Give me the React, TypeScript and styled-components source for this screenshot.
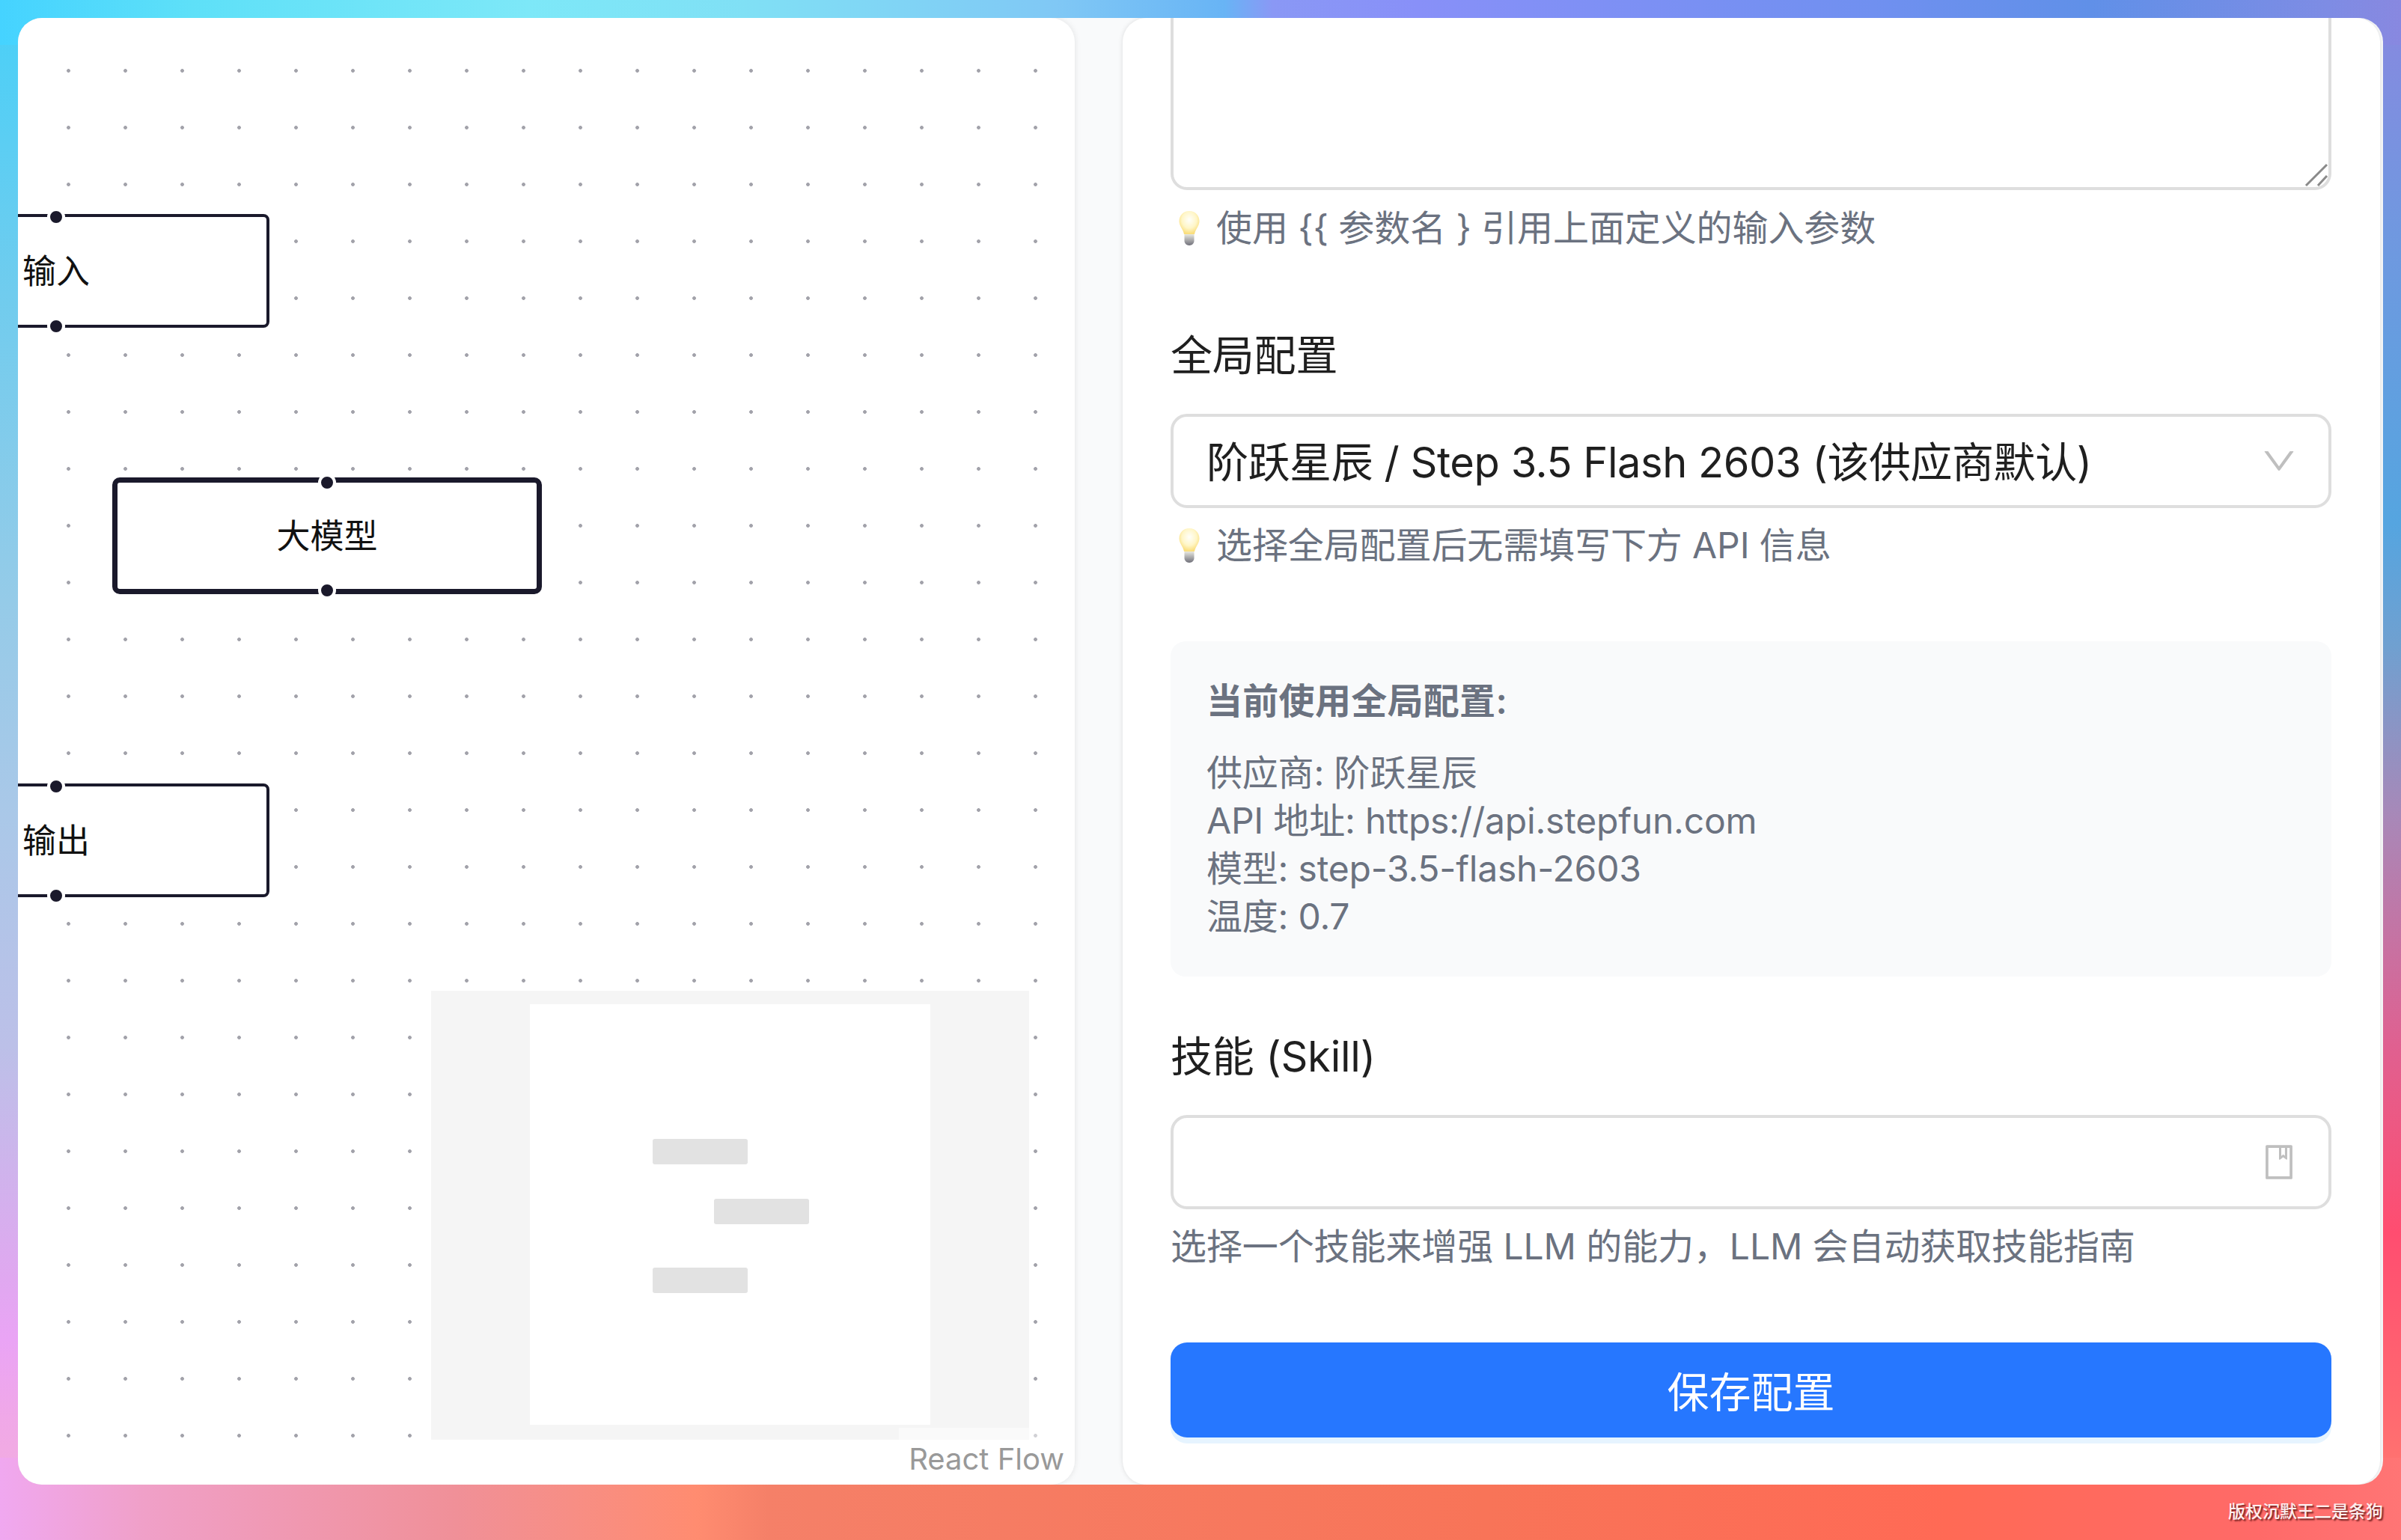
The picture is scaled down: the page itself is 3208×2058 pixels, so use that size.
import styled, { createGlobalStyle } from "styled-components";
import { AiOutlineBook, AiOutlineDown } from "react-icons/ai";

const GlobalStyle = createGlobalStyle`
  * {
    box-sizing: border-box;
  }

  body {
    margin: 0;
    font-family: Inter, "Noto Sans CJK SC", sans-serif;
  }
`;

const Page = styled.div`
  position: relative;
  width: 3208px;
  height: 2058px;
  padding: 24px 24px 74px;
  background-repeat: no-repeat;
  background-image:
    linear-gradient(90deg, #45d3ff 0%, #5ee0f8 8%, #7de8f8 22%, #80e0f5 31%, #80c8f5 44%, #68b4f5 51%, #8a98f5 53%, #8890f8 59%, #7090f0 78%, #6090e8 87%, #7e8ce4 97%, #8888e0 100%),
    linear-gradient(90deg, #f0a8f0 0%, #f0a0c8 6%, #f09098 19%, #ff8c70 29%, #f58068 32%, #f87458 62%, #ff6a55 81%, #ff6a68 94%, #ff7575 100%),
    linear-gradient(180deg, #48d0f8 0%, #70ccee 19%, #95cbe8 39%, #aac8e8 53%, #bcc0e8 68%, #e0a8f0 83%, #eaa4f5 87%, #f0a8e8 92%, #f4b0d8 100%),
    linear-gradient(180deg, #8888e0 0%, #7098e0 15%, #55a5e0 34%, #70a0d0 42%, #a888b8 53%, #e06090 68%, #ff4d70 80%, #ff6a70 92%, #ff8070 100%);
  background-size: 100% 60px, 100% 110px, 60px 100%, 60px 100%;
  background-position: top, bottom, left, right;
`;

const Shell = styled.div`
  display: flex;
  gap: 64px;
  height: 100%;
  padding-right: 4px;
  border-radius: 32px;
  background: #f9fafb;
  overflow: hidden;
`;

const Canvas = styled.div`
  position: relative;
  flex: 0 0 1412px;
  border-radius: 32px;
  overflow: hidden;
  box-shadow: 0 0 8px rgba(0, 0, 0, 0.1);
  background-color: #fff;
  background-image: radial-gradient(circle at 67.5px 70.5px, #a2a2aa 2px, transparent 2.8px);
  background-size: 76px 76px;
`;

const FlowNode = styled.div<{ $left: number; $top: number; $bold?: boolean }>`
  position: absolute;
  left: ${(props) => props.$left}px;
  top: ${(props) => props.$top}px;
  width: ${(props) => (props.$bold ? 574 : 570)}px;
  height: ${(props) => (props.$bold ? 156 : 152)}px;
  display: flex;
  align-items: center;
  justify-content: center;
  padding-top: 2px;
  background: #fff;
  border: ${(props) => (props.$bold ? 7 : 4)}px solid #1a192b;
  border-radius: ${(props) => (props.$bold ? 10 : 8)}px;
  color: #111;
  font-size: 45px;
  line-height: 60px;
`;

const Handle = styled.span<{ $side: "top" | "bottom" }>`
  position: absolute;
  left: 50%;
  ${(props) => props.$side}: ${(props) => (props.$side === "top" ? 0 : -2)}px;
  width: 24px;
  height: 24px;
  background: #1a192b;
  border: 4px solid #fff;
  border-radius: 50%;
  transform: translate(-50%, ${(props) => (props.$side === "top" ? "-50%" : "50%")});
`;

const MiniMap = styled.svg`
  position: absolute;
  right: 61px;
  bottom: 60px;
  width: 799px;
  height: 600px;
`;

const Attribution = styled.div`
  position: absolute;
  right: 0;
  bottom: 0;
  width: 235px;
  height: 76px;
  padding: 18px 14px 0 0;
  background: rgba(255, 255, 255, 0.5);
  color: #999;
  font-size: 40px;
  line-height: 48px;
  text-align: right;
`;

const Panel = styled.div`
  flex: 1;
  padding: 0 65px 0 64px;
  border-radius: 32px;
  background: #fff;
  overflow: hidden;
  box-shadow: 0 0 6px rgba(0, 0, 0, 0.12);
`;

const Section = styled.section`
  margin-bottom: 96px;
`;

const TextareaWrap = styled.div`
  position: relative;
  display: flow-root;
  height: 230px;
  margin-bottom: 19px;
`;

const Textarea = styled.textarea`
  display: block;
  width: 100%;
  height: 260px;
  margin-top: -30px;
  border: 4px solid #dedede;
  border-radius: 22px;
  background: #fff;
  resize: none;
  outline: none;
`;

const ResizeGrip = styled.svg`
  position: absolute;
  right: 4px;
  bottom: 4px;
  width: 32px;
  height: 32px;
`;

const Hint = styled.div`
  display: flex;
  align-items: center;
  gap: 11px;
  color: #6b7280;
  font-size: 48px;
  letter-spacing: -0.1px;
  line-height: 64px;
`;

const BulbIcon = styled.svg`
  flex: none;
  width: 48px;
  height: 48px;
  margin-left: 2px;
`;

const Label = styled.div`
  margin-bottom: 36px;
  color: #1f1f1f;
  font-size: 56px;
  letter-spacing: -0.2px;
  line-height: 84px;
`;

const FieldBox = styled.div`
  display: flex;
  align-items: center;
  justify-content: space-between;
  height: 126px;
  margin-bottom: 18px;
  padding: 0 40px 0 44px;
  border: 4px solid #dedede;
  border-radius: 22px;
  background: #fff;
  color: #1f1f1f;
  font-size: 56px;
  letter-spacing: -0.45px;
  svg {
    flex: none;
    color: #bfbfbf;
  }
`;

const FieldText = styled.span`
  margin-bottom: 6px;
`;

const InfoBox = styled.div`
  margin-bottom: 65px;
  padding: 48px;
  border-radius: 20px;
  background: #f9fafb;
  color: #6b7280;
  font-size: 48px;
  letter-spacing: -0.2px;
  line-height: 64px;
`;

const InfoTitle = styled.div`
  margin-bottom: 32px;
  font-weight: 600;
  letter-spacing: 0.3px;
`;

const SaveButton = styled.button`
  display: block;
  width: 100%;
  height: 127px;
  padding-bottom: 4px;
  border: none;
  border-radius: 22px;
  background: #2677ff;
  box-shadow: 0 8px 0 rgba(5, 145, 255, 0.1);
  color: #fff;
  font-family: inherit;
  font-size: 56px;
`;

const Watermark = styled.div`
  position: absolute;
  right: 24px;
  bottom: 26px;
  color: #fdeeee;
  font-size: 23px;
  font-weight: 500;
  line-height: 24px;
  text-shadow: 2px 2px 2px rgba(60, 0, 0, 0.75);
`;

const Bulb = () => (
  <BulbIcon viewBox="0 0 48 48">
    <defs>
      <radialGradient id="glass" cx="50%" cy="38%" r="60%">
        <stop offset="0%" stopColor="#fffffa" />
        <stop offset="60%" stopColor="#fff6c8" />
        <stop offset="100%" stopColor="#fade7c" />
      </radialGradient>
      <linearGradient id="base" x1="0" y1="0" x2="0" y2="1">
        <stop offset="0%" stopColor="#e8e8e0" />
        <stop offset="100%" stopColor="#70707a" />
      </linearGradient>
    </defs>
    <path
      d="M23 1C15 1 9.500 7 9.500 14.500c0 6.500 5 10 6.500 17.500h14c1.500-7.500 6.500-11 6.500-17.500C36.500 7 31 1 23 1z"
      fill="url(#glass)"
    />
    <path d="M16.500 32h13v9c0 3-3 6-6.500 6s-6.500-3-6.500-6z" fill="url(#base)" />
  </BulbIcon>
);

const App = () => {
  return (
    <Page>
      <GlobalStyle />
      <Shell>
        <Canvas>
          <FlowNode $left={-234} $top={262}>
            <Handle $side="top" />
            输入
            <Handle $side="bottom" />
          </FlowNode>
          <FlowNode $left={126} $top={614} $bold>
            <Handle $side="top" />
            大模型
            <Handle $side="bottom" />
          </FlowNode>
          <FlowNode $left={-234} $top={1023}>
            <Handle $side="top" />
            输出
            <Handle $side="bottom" />
          </FlowNode>
          <MiniMap viewBox="0 0 799 600">
            <rect width="799" height="600" fill="#f5f5f5" />
            <rect x="132" y="18" width="535" height="562" fill="#fff" />
            <rect x="296" y="198" width="127" height="34" rx="3" fill="#e2e2e2" />
            <rect x="378" y="278" width="127" height="34" rx="3" fill="#e2e2e2" />
            <rect x="296" y="370" width="127" height="34" rx="3" fill="#e2e2e2" />
          </MiniMap>
          <Attribution>React Flow</Attribution>
        </Canvas>
        <Panel>
          <Section>
            <TextareaWrap>
              <Textarea readOnly />
              <ResizeGrip viewBox="0 0 32 32">
                <path d="M2 30 30 2M18 30 30 17" stroke="#8a8a8a" strokeWidth="3" fill="none" />
              </ResizeGrip>
            </TextareaWrap>
            <Hint>
              <Bulb />
              {"使用 {{ 参数名 } 引用上面定义的输入参数"}
            </Hint>
          </Section>
          <Section>
            <Label>全局配置</Label>
            <FieldBox>
              <FieldText>阶跃星辰 / Step 3.5 Flash 2603 (该供应商默认)</FieldText>
              <AiOutlineDown size={52} />
            </FieldBox>
            <Hint>
              <Bulb />
              选择全局配置后无需填写下方 API 信息
            </Hint>
          </Section>
          <InfoBox>
            <InfoTitle>当前使用全局配置:</InfoTitle>
            <div>供应商: 阶跃星辰</div>
            <div>API 地址: https://api.stepfun.com</div>
            <div>模型: step-3.5-flash-2603</div>
            <div>温度: 0.7</div>
          </InfoBox>
          <Section>
            <Label>技能 (Skill)</Label>
            <FieldBox>
              <span />
              <AiOutlineBook size={52} />
            </FieldBox>
            <Hint>选择一个技能来增强 LLM 的能力，LLM 会自动获取技能指南</Hint>
          </Section>
          <SaveButton>保存配置</SaveButton>
        </Panel>
      </Shell>
      <Watermark>版权沉默王二是条狗</Watermark>
    </Page>
  );
};

export default App;
